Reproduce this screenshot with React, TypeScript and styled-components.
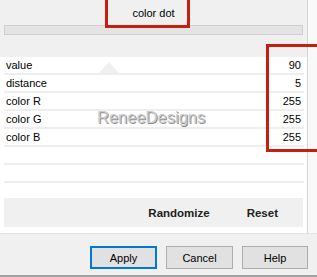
import React from "react"
import styled, { createGlobalStyle } from "styled-components"

const GlobalStyle = createGlobalStyle`
  html, body {
    margin: 0;
    padding: 0;
    background: #f0f0f0;
  }
  body {
    font-family: "Liberation Sans", Arial, sans-serif;
    -webkit-font-smoothing: antialiased;
  }
`

const Window = styled.div`
  position: relative;
  width: 317px;
  height: 277px;
  overflow: hidden;
  background: #f0f0f0;
  display: flex;
  flex-direction: column;
  font-size: 11px;
  color: #000;
`

const Main = styled.div`
  display: flex;
  height: 233px;
`

const Panel = styled.div`
  width: 307px;
  display: flex;
  flex-direction: column;
`

const Strip = styled.div`
  flex: 1;
  background: #f9f9f9;
  border-left: 1px solid #d4d4d4;
`

const Header = styled.div`
  height: 57px;
  display: flex;
  flex-direction: column;
`

const Title = styled.div`
  height: 25px;
  line-height: 26px;
  text-align: center;
`

const Track = styled.div`
  height: 8px;
  margin: 0 4px;
  background: #e4e4e4;
  border: 1px solid #cfcfcf;
`

const Sheet = styled.div`
  position: relative;
  flex: 1;
  background: #fff;
  display: flex;
  flex-direction: column;
  padding-bottom: 6px;
`

const Row = styled.div`
  height: 16px;
  margin: 0 3px 0 4px;
  padding: 0 3px 0 2px;
  display: flex;
  align-items: center;
  justify-content: space-between;
  border-bottom: 2px solid #eeeeee;
`

const ActionBar = styled.div`
  margin: 15px 4px 0;
  height: 29px;
  background: #f0f0f0;
  display: flex;
  align-items: center;
  justify-content: flex-end;
  gap: 37px;
  padding-right: 25px;
`

const Action = styled.span`
  font-size: 11.5px;
  font-weight: bold;
  color: #222;
`

const Footer = styled.div`
  flex: 1;
  display: flex;
  justify-content: flex-end;
  align-items: flex-start;
  gap: 9px;
  padding: 12px 9px 0 0;
  border-top: 1px solid #e2e2e2;
  border-bottom: 2px solid #a0a0a0;
`

const Button = styled.button<{ $primary?: boolean; $w?: number }>`
  width: ${(p) => p.$w ?? 67}px;
  height: 23px;
  padding: 0;
  font-family: "Liberation Sans", Arial, sans-serif;
  font-size: 11px;
  color: #000;
  background: #e1e1e1;
  border: ${(p) => (p.$primary ? "2px solid #0078d7" : "1px solid #adadad")};
  box-sizing: border-box;
`

const Thumb = styled.div`
  position: absolute;
  left: 99px;
  top: 5px;
  width: 0;
  height: 0;
  border-left: 10px solid transparent;
  border-right: 10px solid transparent;
  border-bottom: 11px solid #f0f0f0;
`

const Watermark = styled.div`
  position: absolute;
  left: 97px;
  top: 108px;
  font-size: 16.5px;
  color: #cccccc;
  text-shadow: 1px 1px 0 #8e8e8e;
  pointer-events: none;
`

const Highlight = styled.div<{ $l: number; $t: number; $w: number; $h: number }>`
  position: absolute;
  left: ${(p) => p.$l}px;
  top: ${(p) => p.$t}px;
  width: ${(p) => p.$w}px;
  height: ${(p) => p.$h}px;
  border: 3px solid #c4200f;
  box-sizing: border-box;
  pointer-events: none;
`

const rows: [string, string][] = [
  ["value", "90"],
  ["distance", "5"],
  ["color R", "255"],
  ["color G", "255"],
  ["color B", "255"],
  ["", ""],
  ["", ""],
]

export default function App() {
  return (
    <>
      <GlobalStyle />
      <Window>
        <Main>
          <Panel>
            <Header>
              <Title>color dot</Title>
              <Track />
            </Header>
            <Sheet>
              <Thumb />
              {rows.map(([label, val], i) => (
                <Row key={i}>
                  <span>{label}</span>
                  <span>{val}</span>
                </Row>
              ))}
              <ActionBar>
                <Action>Randomize</Action>
                <Action>Reset</Action>
              </ActionBar>
            </Sheet>
          </Panel>
          <Strip />
        </Main>
        <Footer>
          <Button $primary>Apply</Button>
          <Button>Cancel</Button>
          <Button $w={66}>Help</Button>
        </Footer>
        <Watermark>ReneeDesigns</Watermark>
        <Highlight $l={105} $t={-3} $w={85} $h={31} />
        <Highlight $l={266} $t={44} $w={60} $h={108} />
      </Window>
    </>
  )
}
